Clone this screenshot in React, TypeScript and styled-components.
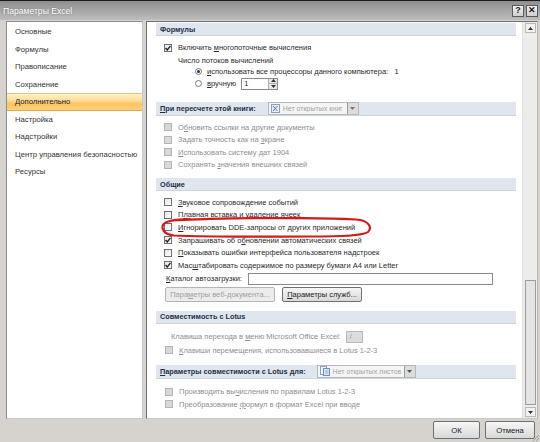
import React from "react";
import styled, { createGlobalStyle, css } from "styled-components";

const GlobalStyle = createGlobalStyle`
  html, body {
    margin: 0;
    padding: 0;
    background: #d6d3ce;
  }
  body {
    font-family: "Liberation Sans", Arial, sans-serif;
    font-size: 7.5px;
    color: #222;
  }
`;

const Window = styled.div`
  width: 540px;
  height: 442px;
  display: flex;
  flex-direction: column;
  background: #d6d3ce;
  overflow: hidden;
  position: relative;
`;

const TitleBar = styled.div`
  height: 20px;
  box-sizing: border-box;
  border-top: 1px solid #1a1a1a;
  background: linear-gradient(to bottom, #8e8e8e 0%, #a6a6a6 50%, #bdbdbd 100%);
  display: flex;
  align-items: center;
  justify-content: space-between;
  padding: 0 2px 0 3px;
`;

const Title = styled.span`
  color: #fff;
  font-size: 8.6px;
  text-shadow: 0 0 2px rgba(0, 0, 0, 0.35);
`;

const TitleButtons = styled.div`
  display: flex;
  gap: 2px;
`;

const TitleButton = styled.div`
  width: 10px;
  height: 10px;
  border: 1px solid #5a5a5a;
  background: linear-gradient(#f2f2f2, #cfcfcf);
  display: flex;
  align-items: center;
  justify-content: center;
  font-size: 9px;
  font-weight: bold;
  color: #222;
  line-height: 1;
`;

const Body = styled.div`
  display: flex;
  gap: 3px;
  padding: 1px 2px 0 6px;
  height: 399px;
  box-sizing: border-box;
`;

const NavPanel = styled.div`
  width: 137px;
  box-sizing: border-box;
  background: #fff;
  border: 1px solid #8c8c8c;
  border-right-color: #c8c8c8;
  border-bottom-color: #c8c8c8;
  padding-top: 1px;
`;

const NavItem = styled.div<{ $active?: boolean }>`
  height: 17.5px;
  box-sizing: border-box;
  display: flex;
  align-items: center;
  padding-left: 8px;
  white-space: nowrap;
  font-size: 7.7px;
  color: #333;
  ${(p) =>
    p.$active &&
    css`
      background: linear-gradient(to bottom, #fff2cc 0%, #fedd98 40%, #fbc45f 62%, #fcd27c 100%);
      border-top: 1px solid #e8c27a;
      border-bottom: 1px solid #e0a84a;
      color: #222;
    `}
`;

const ContentPanel = styled.div`
  flex: 1;
  display: flex;
  background: #fff;
  border: 1px solid #6e6e6e;
  border-right-color: #bdbdbd;
  border-bottom-color: #c8c8c8;
`;

const Scroll = styled.div`
  flex: 1;
  padding: 1px 6px 0 9px;
`;

const Header = styled.div<{ $tall?: boolean; $gap?: number }>`
  height: ${(p) => (p.$tall ? 14 : 13)}px;
  box-sizing: border-box;
  background: #dfe6ee;
  border-bottom: 1px solid #cad6e2;
  display: flex;
  align-items: center;
  gap: ${(p) => p.$gap ?? 12}px;
  padding-left: 4px;
  font-weight: bold;
  color: #1d2f47;
  font-size: 7.3px;
`;

const Section = styled.div<{ $top?: number }>`
  margin-top: ${(p) => p.$top ?? 0}px;
`;

const Block = styled.div<{ $top: number }>`
  padding-top: ${(p) => p.$top}px;
`;

const Row = styled.div<{ $h?: number; $indent?: number; $disabled?: boolean; $gap?: number }>`
  height: ${(p) => p.$h ?? 12.6}px;
  display: flex;
  align-items: center;
  gap: ${(p) => p.$gap ?? 6}px;
  padding-left: ${(p) => p.$indent ?? 0}px;
  color: ${(p) => (p.$disabled ? "#8e8e8e" : "#2a2a2a")};
  white-space: nowrap;
  position: relative;
`;

const Key = styled.span`
  text-decoration: underline;
`;

const CheckBox = styled.span<{ $disabled?: boolean }>`
  width: 8px;
  height: 8px;
  box-sizing: border-box;
  flex: none;
  border: 1px solid ${(p) => (p.$disabled ? "#b4b4b4" : "#6f6f6f")};
  background: ${(p) => (p.$disabled ? "#d8d8d8" : "linear-gradient(135deg, #e6e6e6, #ffffff)")};
  display: flex;
  align-items: center;
  justify-content: center;
`;

const Radio = styled.span<{ $on?: boolean }>`
  width: 7px;
  height: 7px;
  box-sizing: border-box;
  flex: none;
  border-radius: 50%;
  border: 1px solid #7a7a7a;
  background: #fff;
  display: flex;
  align-items: center;
  justify-content: center;
  &::after {
    content: "";
    width: 3px;
    height: 3px;
    border-radius: 50%;
    background: ${(p) => (p.$on ? "#333" : "transparent")};
  }
`;

const Spinner = styled.div`
  width: 37px;
  height: 12px;
  box-sizing: border-box;
  border: 1px solid #8a8a8a;
  display: flex;
`;

const SpinValue = styled.span`
  flex: 1;
  padding-left: 2px;
  line-height: 10px;
`;

const SpinButtons = styled.div`
  width: 8px;
  display: flex;
  flex-direction: column;
  border-left: 1px solid #b0b0b0;
  background: #e8e8e8;
`;

const SpinArrow = styled.div`
  flex: 1;
  display: flex;
  align-items: center;
  justify-content: center;
  & + & {
    border-top: 1px solid #b0b0b0;
  }
`;

const Combo = styled.div<{ $w: number }>`
  width: ${(p) => p.$w}px;
  height: 13px;
  box-sizing: border-box;
  border: 1px solid #b8b8b8;
  background: #f4f4f4;
  display: flex;
  align-items: center;
  gap: 3px;
  padding-left: 2px;
  font-weight: normal;
  color: #a4a4a4;
  font-size: 7px;
`;

const ComboText = styled.span`
  flex: 1;
  white-space: nowrap;
  overflow: hidden;
`;

const ComboArrow = styled.div`
  width: 10px;
  height: 11px;
  border-left: 1px solid #9a9a9a;
  background: #dcdcdc;
  display: flex;
  align-items: center;
  justify-content: center;
`;

const TextInput = styled.div<{ $w: number; $disabled?: boolean }>`
  width: ${(p) => p.$w}px;
  height: 12px;
  box-sizing: border-box;
  border: 1px solid ${(p) => (p.$disabled ? "#b8b8b8" : "#8a8a8a")};
  background: ${(p) => (p.$disabled ? "#dcdcdc" : "#fff")};
  color: #9a9a9a;
  padding-left: 3px;
  line-height: 10px;
`;

const Button = styled.div<{ $w: number; $h?: number; $disabled?: boolean }>`
  width: ${(p) => p.$w}px;
  height: ${(p) => p.$h ?? 15}px;
  box-sizing: border-box;
  border: 1px solid ${(p) => (p.$disabled ? "#b4b4b4" : "#707070")};
  border-radius: 2px;
  background: ${(p) =>
    p.$disabled ? "#ececec" : "linear-gradient(to bottom, #f6f6f6 0%, #e8e8e8 50%, #d8d8d8 100%)"};
  color: ${(p) => (p.$disabled ? "#a0a0a0" : "#222")};
  display: flex;
  align-items: center;
  justify-content: center;
  white-space: nowrap;
`;

const ButtonRow = styled.div`
  display: flex;
  gap: 7px;
  padding-left: 9px;
  margin-top: 1px;
`;

const ScrollBar = styled.div`
  width: 15px;
  background: #ececea;
  border-left: 1px solid #e0e0e0;
  display: flex;
  flex-direction: column;
  align-items: center;
  padding: 1px 0;
  box-sizing: border-box;
`;

const ScrollArrow = styled.div`
  width: 11px;
  height: 10px;
  box-sizing: border-box;
  border: 1px solid #b9b9b9;
  background: #f2f2f2;
  display: flex;
  align-items: center;
  justify-content: center;
`;

const Track = styled.div`
  flex: 1;
  width: 100%;
  display: flex;
  flex-direction: column;
  align-items: center;
  padding: 2px 0;
  box-sizing: border-box;
`;

const Thumb = styled.div`
  width: 11px;
  box-sizing: border-box;
  border: 1px solid #9c9c9c;
  background: #e4e4e4;
`;

const Footer = styled.div`
  flex: 1;
  display: flex;
  justify-content: flex-end;
  align-items: flex-start;
  gap: 5px;
  padding: 2px 5px 0 0;
  font-size: 7.7px;
`;

const Grip = styled.svg`
  position: absolute;
  right: 0;
  bottom: 0;
`;

const Ellipse = styled.svg`
  position: absolute;
  left: 4px;
  top: -4px;
  pointer-events: none;
`;

const Tick = () => (
  <svg width="6" height="6" viewBox="0 0 6 6">
    <path d="M0.5 3 L2.3 5 L5.5 0.8" fill="none" stroke="#222" strokeWidth="1.4" />
  </svg>
);

const Check = ({ checked, disabled }: { checked?: boolean; disabled?: boolean }) => (
  <CheckBox $disabled={disabled}>{checked && <Tick />}</CheckBox>
);

const Tri = ({ up, color = "#333" }: { up?: boolean; color?: string }) => (
  <svg width="5" height="3" viewBox="0 0 5 3">
    <path d={up ? "M0 3 L2.5 0 L5 3 Z" : "M0 0 L5 0 L2.5 3 Z"} fill={color} />
  </svg>
);

const BookIcon = () => (
  <svg width="9" height="9" viewBox="0 0 9 9">
    <rect x="0.5" y="0.5" width="8" height="8" fill="#e9eef6" stroke="#8aa0bf" />
    <path d="M2 2 L6.5 7 M6.5 2 L2 7" stroke="#5b7bb0" strokeWidth="1" />
  </svg>
);

const SheetIcon = () => (
  <svg width="10" height="10" viewBox="0 0 10 10">
    <rect x="0.5" y="0.5" width="6" height="8" fill="#f1f5fb" stroke="#8aa0bf" />
    <rect x="3.5" y="2.5" width="6" height="7" fill="#dce8f5" stroke="#6e8fbf" />
    <path d="M5 5 H8.5 M5 7 H8.5" stroke="#7fa0d0" strokeWidth="0.8" />
  </svg>
);

const navItems = [
  "Основные",
  "Формулы",
  "Правописание",
  "Сохранение",
  "Дополнительно",
  "Настройка",
  "Надстройки",
  "Центр управления безопасностью",
  "Ресурсы",
];

export default function App() {
  return (
    <>
      <GlobalStyle />
      <Window>
        <TitleBar>
          <Title>Параметры Excel</Title>
          <TitleButtons>
            <TitleButton>?</TitleButton>
            <TitleButton>✕</TitleButton>
          </TitleButtons>
        </TitleBar>

        <Body>
          <NavPanel>
            {navItems.map((item) => (
              <NavItem key={item} $active={item === "Дополнительно"}>
                {item}
              </NavItem>
            ))}
          </NavPanel>

          <ContentPanel>
            <Scroll>
              <Section>
                <Header>Формулы</Header>
                <Block $top={5}>
                  <Row $h={13} $indent={8}>
                    <Check checked />
                    <span>
                      Включить <Key>м</Key>ногопоточные вычисления
                    </span>
                  </Row>
                  <Row $h={12} $indent={22}>
                    Число потоков вычислений
                  </Row>
                  <Row $h={11} $indent={39} $gap={5}>
                    <Radio $on />
                    <span>
                      <Key>и</Key>спользовать все процессоры данного компьютера:&nbsp;&nbsp;&nbsp;1
                    </span>
                  </Row>
                  <Row $h={13} $indent={39} $gap={5}>
                    <Radio />
                    <span>
                      <Key>в</Key>ручную
                    </span>
                    <Spinner>
                      <SpinValue>1</SpinValue>
                      <SpinButtons>
                        <SpinArrow>
                          <Tri up />
                        </SpinArrow>
                        <SpinArrow>
                          <Tri />
                        </SpinArrow>
                      </SpinButtons>
                    </Spinner>
                  </Row>
                </Block>
              </Section>

              <Section $top={12}>
                <Header $tall>
                  <span>
                    <Key>П</Key>ри пересчете этой книги:
                  </span>
                  <Combo $w={91}>
                    <BookIcon />
                    <ComboText>Нет открытых книг</ComboText>
                    <ComboArrow>
                      <Tri color="#777" />
                    </ComboArrow>
                  </Combo>
                </Header>
                <Block $top={5}>
                  <Row $h={12.5} $indent={8} $disabled>
                    <Check disabled />
                    <span>
                      О<Key>б</Key>новить ссылки на другие документы
                    </span>
                  </Row>
                  <Row $h={12.5} $indent={8} $disabled>
                    <Check disabled />
                    <span>
                      Задать точность как на <Key>э</Key>кране
                    </span>
                  </Row>
                  <Row $h={12.5} $indent={8} $disabled>
                    <Check disabled />
                    <span>
                      <Key>И</Key>спользовать систему дат 1904
                    </span>
                  </Row>
                  <Row $h={12.5} $indent={8} $disabled>
                    <Check disabled />
                    <span>
                      Сохранять <Key>з</Key>начения внешних связей
                    </span>
                  </Row>
                </Block>
              </Section>

              <Section $top={7}>
                <Header>Общие</Header>
                <Block $top={5}>
                  <Row $indent={8}>
                    <Check />
                    <span>
                      <Key>З</Key>вуковое сопровождение событий
                    </span>
                  </Row>
                  <Row $indent={8}>
                    <Check />
                    <span>
                      П<Key>л</Key>авная вставка и удаление ячеек
                    </span>
                  </Row>
                  <Row $indent={8}>
                    <Check />
                    <span>
                      <Key>И</Key>гнорировать DDE-запросы от других приложений
                    </span>
                    <Ellipse width="212" height="21" viewBox="0 0 212 21">
                      <path
                        d="M12 3.5 C60 1 150 0 196 2.5 C210 3.5 212 11 208 15 C203 19 180 19.5 150 19.5 C100 19.8 40 19.8 14 18.5 C3 17.5 1.5 11 3 8 C5 4 14 2.5 30 2.2"
                        fill="none"
                        stroke="#d21a1a"
                        strokeWidth="2.2"
                        strokeLinecap="round"
                      />
                    </Ellipse>
                  </Row>
                  <Row $indent={8}>
                    <Check checked />
                    <span>
                      Запрашивать об о<Key>б</Key>новлении автоматических связей
                    </span>
                  </Row>
                  <Row $indent={8}>
                    <Check />
                    <span>
                      <Key>П</Key>оказывать ошибки интерфейса пользователя надстроек
                    </span>
                  </Row>
                  <Row $indent={8}>
                    <Check checked />
                    <span>
                      Мас<Key>ш</Key>табировать содержимое по размеру бумаги А4 или Letter
                    </span>
                  </Row>
                  <Row $h={14} $indent={10}>
                    <span>
                      <Key>К</Key>аталог автозагрузки:
                    </span>
                    <TextInput $w={245} />
                  </Row>
                </Block>
                <ButtonRow>
                  <Button $w={110} $disabled>
                    Пара<Key>м</Key>етры веб-документа...
                  </Button>
                  <Button $w={80}>
                    <Key>П</Key>араметры служб...
                  </Button>
                </ButtonRow>
              </Section>

              <Section $top={9}>
                <Header>Совместимость с Lotus</Header>
                <Block $top={6}>
                  <Row $h={14} $indent={15} $disabled $gap={5}>
                    <span>
                      Клавиша перехода в <Key>м</Key>еню Microsoft Office Excel:
                    </span>
                    <TextInput $w={17} $disabled>
                      /
                    </TextInput>
                  </Row>
                  <Row $h={13} $indent={9} $disabled>
                    <Check disabled />
                    <span>
                      <Key>К</Key>лавиши перемещения, использовавшиеся в Lotus 1-2-3
                    </span>
                  </Row>
                </Block>
              </Section>

              <Section $top={8}>
                <Header $tall $gap={11}>
                  <span>
                    <Key>П</Key>араметры совместимости с Lotus для:
                  </span>
                  <Combo $w={99}>
                    <SheetIcon />
                    <ComboText>Нет открытых листов</ComboText>
                    <ComboArrow>
                      <Tri color="#555" />
                    </ComboArrow>
                  </Combo>
                </Header>
                <Block $top={7}>
                  <Row $indent={9} $disabled>
                    <Check disabled />
                    <span>
                      Производить вы<Key>ч</Key>исления по правилам Lotus 1-2-3
                    </span>
                  </Row>
                  <Row $indent={9} $disabled>
                    <Check disabled />
                    <span>
                      Преобразование <Key>ф</Key>ормул в формат Excel при вводе
                    </span>
                  </Row>
                </Block>
              </Section>
            </Scroll>

            <ScrollBar>
              <ScrollArrow>
                <Tri up />
              </ScrollArrow>
              <Track>
                <div style={{ flex: 1 }} />
                <Thumb style={{ height: 125 }} />
              </Track>
              <ScrollArrow>
                <Tri />
              </ScrollArrow>
            </ScrollBar>
          </ContentPanel>
        </Body>

        <Footer>
          <Button $w={47} $h={18}>
            ОК
          </Button>
          <Button $w={50} $h={18}>
            Отмена
          </Button>
        </Footer>
        <Grip width="9" height="9" viewBox="0 0 9 9">
          <path d="M8 2 L2 8 M8 5 L5 8" stroke="#9a9a9a" strokeWidth="1" />
        </Grip>
      </Window>
    </>
  );
}
